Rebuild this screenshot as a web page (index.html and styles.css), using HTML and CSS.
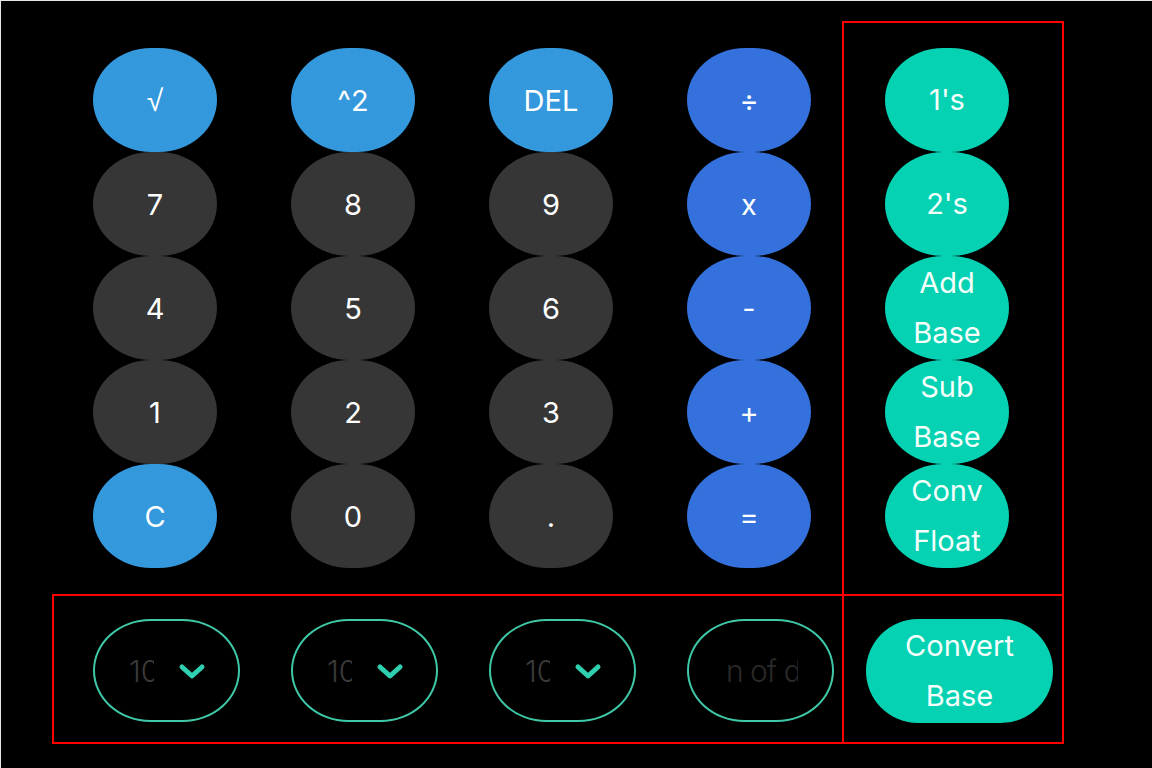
FILE: index.html
```html
<!DOCTYPE html>
<html lang="en">
<head>
<meta charset="utf-8">
<title>Base Calculator</title>
<link rel="stylesheet" href="styles.css">
</head>
<body>
<div class="screen">
  <div class="top-row">
    <div class="keypad">
      <button class="key key-fn"><span class="sym">√</span></button>
      <button class="key key-fn">^2</button>
      <button class="key key-fn">DEL</button>
      <button class="key key-op">÷</button>

      <button class="key key-num">7</button>
      <button class="key key-num">8</button>
      <button class="key key-num">9</button>
      <button class="key key-op">x</button>

      <button class="key key-num">4</button>
      <button class="key key-num">5</button>
      <button class="key key-num">6</button>
      <button class="key key-op">-</button>

      <button class="key key-num">1</button>
      <button class="key key-num">2</button>
      <button class="key key-num">3</button>
      <button class="key key-op">+</button>

      <button class="key key-fn">C</button>
      <button class="key key-num">0</button>
      <button class="key key-num">.</button>
      <button class="key key-op">=</button>
    </div>
    <div class="side">
      <button class="key key-base">1's</button>
      <button class="key key-base">2's</button>
      <button class="key key-base">Add<br>Base</button>
      <button class="key key-base">Sub<br>Base</button>
      <button class="key key-base">Conv<br>Float</button>
    </div>
  </div>
  <div class="bottom-row">
    <div class="selectors">
      <div class="select">
        <span class="select-value">10</span>
        <svg class="chevron" viewBox="0 0 28 18" width="28" height="18"><path d="M4 4 L14 13 L24 4" fill="none" stroke="#2fd0b0" stroke-width="5" stroke-linecap="round" stroke-linejoin="round"/></svg>
      </div>
      <div class="select">
        <span class="select-value">10</span>
        <svg class="chevron" viewBox="0 0 28 18" width="28" height="18"><path d="M4 4 L14 13 L24 4" fill="none" stroke="#2fd0b0" stroke-width="5" stroke-linecap="round" stroke-linejoin="round"/></svg>
      </div>
      <div class="select">
        <span class="select-value">10</span>
        <svg class="chevron" viewBox="0 0 28 18" width="28" height="18"><path d="M4 4 L14 13 L24 4" fill="none" stroke="#2fd0b0" stroke-width="5" stroke-linecap="round" stroke-linejoin="round"/></svg>
      </div>
      <div class="select select-input">
        <span class="input-placeholder">n of digits</span>
      </div>
    </div>
    <div class="convert-box">
      <button class="convert">Convert<br>Base</button>
    </div>
  </div>
</div>
</body>
</html>
```

FILE: styles.css
```css
html, body {
  margin: 0;
  padding: 0;
  background: #000;
}

.screen {
  box-sizing: border-box;
  width: 1152px;
  height: 768px;
  background: #000;
  border-top: 1px solid #e6e6e6;
  border-left: 1px solid #e6e6e6;
  padding: 20px 0 0 51px;
  font-family: Inter, "Liberation Sans", sans-serif;
}

.top-row {
  display: flex;
  height: 573px;
}

.keypad {
  box-sizing: border-box;
  width: 790px;
  padding: 27px 0 0 41px;
  display: grid;
  grid-template-columns: repeat(4, 124px);
  grid-auto-rows: 104px;
  column-gap: 74px;
  align-content: start;
}

.side {
  box-sizing: border-box;
  width: 222px;
  border: 2px solid #ff0000;
  border-bottom: none;
  padding: 25px 0 0 41px;
  display: flex;
  flex-direction: column;
}

.key {
  width: 124px;
  height: 104px;
  border: none;
  border-radius: 58px / 52px;
  color: #fff;
  font-family: Inter, "Liberation Sans", "DejaVu Sans", sans-serif;
  font-size: 29px;
  font-weight: 400;
  line-height: 50px;
  padding: 2px 0 0 0;
  display: flex;
  align-items: center;
  justify-content: center;
  text-align: center;
  flex-shrink: 0;
}

.sym {
  font-family: "DejaVu Sans", sans-serif;
  font-size: 30px;
  font-weight: 300;
}

.key-fn {
  background: #3498dc;
}

.key-op {
  background: #3471dc;
}

.key-num {
  background: #363636;
}

.key-base {
  background: #05d1b3;
  color: #f4fffb;
  padding-top: 0;
}

.bottom-row {
  display: flex;
  height: 150px;
}

.selectors {
  box-sizing: border-box;
  width: 790px;
  border: 2px solid #ff0000;
  border-right: none;
  padding: 23px 0 0 39px;
  display: flex;
  gap: 51px;
  align-items: flex-start;
}

.select {
  box-sizing: border-box;
  width: 147px;
  height: 103px;
  border: 2px solid #3fc8a8;
  border-radius: 58px / 52px;
  display: flex;
  align-items: center;
  padding-left: 34px;
}

.select-value {
  width: 25px;
  overflow: hidden;
  white-space: nowrap;
  color: #3a3a3a;
  font-size: 30px;
  font-weight: 300;
  line-height: 36px;
}

.chevron {
  margin-left: 24px;
  margin-top: 2px;
  display: block;
}

.select-input {
  padding-left: 37px;
}

.input-placeholder {
  width: 72px;
  overflow: hidden;
  white-space: nowrap;
  color: #2a2a2a;
  font-size: 30px;
  font-weight: 300;
  line-height: 36px;
  letter-spacing: -1px;
}

.convert-box {
  box-sizing: border-box;
  width: 222px;
  border: 2px solid #ff0000;
  padding: 23px 0 0 22px;
}

.convert {
  width: 187px;
  height: 104px;
  border: none;
  border-radius: 52px;
  background: #05d1b3;
  color: #f4fffb;
  font-family: Inter, "Liberation Sans", sans-serif;
  font-size: 29px;
  line-height: 50px;
  padding: 0;
  text-align: center;
}
```
